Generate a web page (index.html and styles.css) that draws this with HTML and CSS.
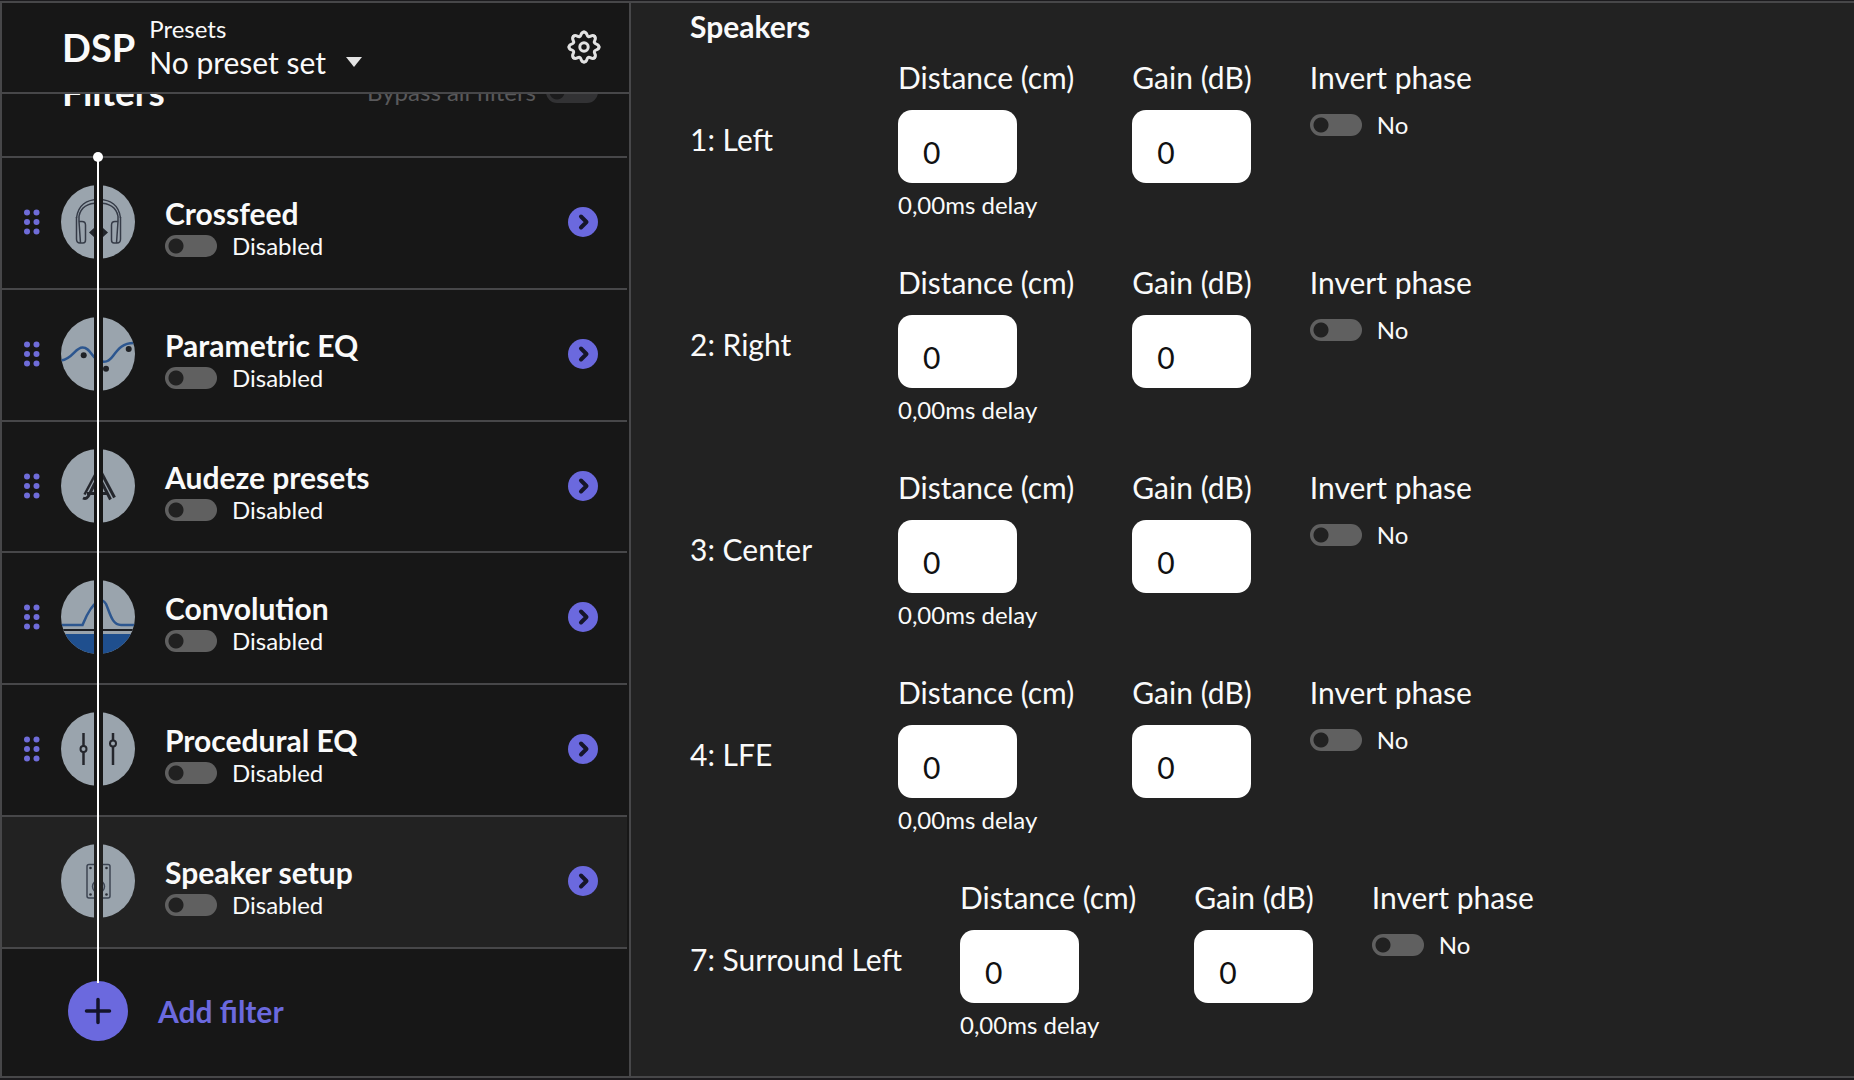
FILE: index.html
```html
<!DOCTYPE html>
<html lang="en">
<head>
<meta charset="utf-8">
<title>DSP</title>
<link rel="stylesheet" href="styles.css">
</head>
<body>
<svg class="defs" aria-hidden="true">
  <defs>
    <clipPath id="halves"><path d="M0 0H33V74H0zM42 0H74V74H42z"/></clipPath>
    <clipPath id="disc"><circle cx="37" cy="37" r="37"/></clipPath>
    <symbol id="grip" viewBox="0 0 16 26"><g fill="#6f6cd9"><circle cx="3" cy="3.500" r="3"/><circle cx="12.500" cy="3.500" r="3"/><circle cx="3" cy="13" r="3"/><circle cx="12.500" cy="13" r="3"/><circle cx="3" cy="22.500" r="3"/><circle cx="12.500" cy="22.500" r="3"/></g></symbol>
    <symbol id="chevron" viewBox="0 0 30 30"><circle cx="15" cy="15" r="15" fill="#6b69de"/><path d="M13 9.500L18.500 15L13 20.500" fill="none" stroke="#16162a" stroke-width="4" stroke-linecap="round" stroke-linejoin="round"/></symbol>
    <path id="tooth" d="M17 2C20.500 2 19.300 5.800 21.300 6.600S25.100 3.900 27.600 6.400"/>
  </defs>
</svg>
<div class="app">
  <aside class="sidebar">
    <header class="top">
      <h1 class="logo">DSP</h1>
      <div class="preset">
        <span class="preset-label" id="preset-label">Presets</span>
        <button class="preset-button" type="button" aria-labelledby="preset-label preset-value"><span id="preset-value">No preset set</span><svg class="caret" viewBox="0 0 16 10"><path d="M0 0H16L8 10z" fill="#e4e4e4"/></svg></button>
      </div>
      <button class="gear" type="button" aria-label="Settings">
        <svg viewBox="0 0 34 34" fill="none" stroke="#e2e2e2" stroke-width="3" stroke-linecap="round"><use href="#tooth"/><use href="#tooth" transform="rotate(45 17 17)"/><use href="#tooth" transform="rotate(90 17 17)"/><use href="#tooth" transform="rotate(135 17 17)"/><use href="#tooth" transform="rotate(180 17 17)"/><use href="#tooth" transform="rotate(225 17 17)"/><use href="#tooth" transform="rotate(270 17 17)"/><use href="#tooth" transform="rotate(315 17 17)"/><circle cx="17" cy="17" r="4.200"/></svg>
      </button>
    </header>
    <div class="filters-head">
      <h2 class="filters-title">Filters</h2>
      <label class="bypass"><span>Bypass all filters</span><input class="toggle" type="checkbox" disabled></label>
    </div>
    <ul class="filters">
      <li class="filter">
        <svg class="grip"><use href="#grip"/></svg>
        <svg class="icon" viewBox="0 0 74 74"><g clip-path="url(#halves)"><circle cx="37" cy="37" r="37" fill="#9aa4ad"/><g fill="none" stroke="#353b47" stroke-width="1.500"><path d="M15.500 33C17 20 26 14.500 37.500 14.500S58 20 59.500 33"/><path d="M18 31C20 22 27 18 37.500 18S55 22 57 31"/><path d="M15.500 32V54Q15.500 58 19 58H22Q24.500 58 24.500 55V40Q24.500 36.500 21 36.500H18L19.500 58M18 31V37"/><path d="M59.500 32V54Q59.500 58 56 58H53Q50.500 58 50.500 55V40Q50.500 36.500 54 36.500H57L55.500 58M57 31V37"/></g><path d="M28 47.500L33 43V52zM47 47.500L42 43V52z" fill="#22252b"/></g></svg>
        <div class="info"><h3 class="name">Crossfeed</h3><label class="switch"><input class="toggle" type="checkbox"><span>Disabled</span></label></div>
        <button class="open" type="button" aria-label="Open Crossfeed"><svg><use href="#chevron"/></svg></button>
      </li>
      <li class="filter">
        <svg class="grip"><use href="#grip"/></svg>
        <svg class="icon" viewBox="0 0 74 74"><g clip-path="url(#halves)"><circle cx="37" cy="37" r="37" fill="#9aa4ad"/><path clip-path="url(#disc)" d="M0 43.500C12 42 14 30.500 21.500 30.500S30 39 36 42.500S47 46 52 39S62 25.500 74 26" fill="none" stroke="#2c568f" stroke-width="2.500"/><g fill="#202226"><circle cx="22.700" cy="38.300" r="3"/><circle cx="45" cy="51.700" r="3"/><circle cx="67.700" cy="32" r="3"/></g></g></svg>
        <div class="info"><h3 class="name">Parametric EQ</h3><label class="switch"><input class="toggle" type="checkbox"><span>Disabled</span></label></div>
        <button class="open" type="button" aria-label="Open Parametric EQ"><svg><use href="#chevron"/></svg></button>
      </li>
      <li class="filter">
        <svg class="grip"><use href="#grip"/></svg>
        <svg class="icon" viewBox="0 0 74 74"><g clip-path="url(#halves)"><circle cx="37" cy="37" r="37" fill="#9aa4ad"/><g fill="none" stroke="#24262c"><path d="M34.500 25L23.500 45.500" stroke-width="2.500"/><path d="M34 34L28.500 45Q26 51 22 49" stroke-width="3"/><path d="M26 44.500H47" stroke-width="3"/><path d="M40.500 24L53.500 48.500" stroke-width="3"/><path d="M38.500 29L49.500 50.500" stroke-width="3"/></g></g></svg>
        <div class="info"><h3 class="name">Audeze presets</h3><label class="switch"><input class="toggle" type="checkbox"><span>Disabled</span></label></div>
        <button class="open" type="button" aria-label="Open Audeze presets"><svg><use href="#chevron"/></svg></button>
      </li>
      <li class="filter">
        <svg class="grip"><use href="#grip"/></svg>
        <svg class="icon" viewBox="0 0 74 74"><g clip-path="url(#halves)"><g clip-path="url(#disc)"><rect width="74" height="74" fill="#9aa4ad"/><path d="M0 45H21.500C24 39 29 26 37 21.500Q42 18.500 45 24C49 33 51 45 60 45H74" fill="none" stroke="#2c568f" stroke-width="2.500"/><path d="M0 50H74" stroke="#1b1d22" stroke-width="2"/><rect y="54" width="74" height="20" fill="#1f4f8e"/></g></g></svg>
        <div class="info"><h3 class="name">Convolution</h3><label class="switch"><input class="toggle" type="checkbox"><span>Disabled</span></label></div>
        <button class="open" type="button" aria-label="Open Convolution"><svg><use href="#chevron"/></svg></button>
      </li>
      <li class="filter">
        <svg class="grip"><use href="#grip"/></svg>
        <svg class="icon" viewBox="0 0 74 74"><g clip-path="url(#halves)"><circle cx="37" cy="37" r="37" fill="#9aa4ad"/><g fill="#9aa4ad" stroke="#24262c" stroke-width="2"><path d="M22.500 21V53M52 21V53" stroke-width="2.500"/><circle cx="22.500" cy="37" r="3"/><circle cx="52" cy="31.500" r="3"/></g></g></svg>
        <div class="info"><h3 class="name">Procedural EQ</h3><label class="switch"><input class="toggle" type="checkbox"><span>Disabled</span></label></div>
        <button class="open" type="button" aria-label="Open Procedural EQ"><svg><use href="#chevron"/></svg></button>
      </li>
      <li class="filter selected">
        <span class="grip"></span>
        <svg class="icon" viewBox="0 0 74 74"><g clip-path="url(#halves)"><circle cx="37" cy="37" r="37" fill="#9aa4ad"/><g fill="none" stroke="#3c4452" stroke-width="1.500"><rect x="26" y="20.500" width="23" height="33.500" rx="2"/><circle cx="37.500" cy="42.500" r="6"/></g><g fill="#2b2f38"><circle cx="29.500" cy="24" r="1.300"/><circle cx="45.500" cy="24" r="1.300"/><circle cx="29.500" cy="50.500" r="1.300"/><circle cx="45.500" cy="50.500" r="1.300"/></g></g></svg>
        <div class="info"><h3 class="name">Speaker setup</h3><label class="switch"><input class="toggle" type="checkbox"><span>Disabled</span></label></div>
        <button class="open" type="button" aria-label="Open Speaker setup"><svg><use href="#chevron"/></svg></button>
      </li>
    </ul>
    <div class="add-row">
      <button class="add" type="button"><svg viewBox="0 0 60 60"><circle cx="30" cy="30" r="30" fill="#6b69de"/><path d="M30 18.500V41.500M18.500 30H41.500" stroke="#14142a" stroke-width="3.500" stroke-linecap="round"/></svg><span>Add filter</span></button>
    </div>
  </aside>
  <main class="panel">
    <h2 class="panel-title">Speakers</h2>
    <section class="speaker">
      <h3 class="channel">1: Left</h3>
      <div class="field"><label for="d1">Distance (cm)</label><input class="number" id="d1" type="text" value="0"><span class="delay">0,00ms delay</span></div>
      <div class="field"><label for="g1">Gain (dB)</label><input class="number" id="g1" type="text" value="0"></div>
      <div class="field"><label for="p1">Invert phase</label><div class="switch phase"><input class="toggle" id="p1" type="checkbox"><span>No</span></div></div>
    </section>
    <section class="speaker">
      <h3 class="channel">2: Right</h3>
      <div class="field"><label for="d2">Distance (cm)</label><input class="number" id="d2" type="text" value="0"><span class="delay">0,00ms delay</span></div>
      <div class="field"><label for="g2">Gain (dB)</label><input class="number" id="g2" type="text" value="0"></div>
      <div class="field"><label for="p2">Invert phase</label><div class="switch phase"><input class="toggle" id="p2" type="checkbox"><span>No</span></div></div>
    </section>
    <section class="speaker">
      <h3 class="channel">3: Center</h3>
      <div class="field"><label for="d3">Distance (cm)</label><input class="number" id="d3" type="text" value="0"><span class="delay">0,00ms delay</span></div>
      <div class="field"><label for="g3">Gain (dB)</label><input class="number" id="g3" type="text" value="0"></div>
      <div class="field"><label for="p3">Invert phase</label><div class="switch phase"><input class="toggle" id="p3" type="checkbox"><span>No</span></div></div>
    </section>
    <section class="speaker">
      <h3 class="channel">4: LFE</h3>
      <div class="field"><label for="d4">Distance (cm)</label><input class="number" id="d4" type="text" value="0"><span class="delay">0,00ms delay</span></div>
      <div class="field"><label for="g4">Gain (dB)</label><input class="number" id="g4" type="text" value="0"></div>
      <div class="field"><label for="p4">Invert phase</label><div class="switch phase"><input class="toggle" id="p4" type="checkbox"><span>No</span></div></div>
    </section>
    <section class="speaker">
      <h3 class="channel">7: Surround Left</h3>
      <div class="field"><label for="d7">Distance (cm)</label><input class="number" id="d7" type="text" value="0"><span class="delay">0,00ms delay</span></div>
      <div class="field"><label for="g7">Gain (dB)</label><input class="number" id="g7" type="text" value="0"></div>
      <div class="field"><label for="p7">Invert phase</label><div class="switch phase"><input class="toggle" id="p7" type="checkbox"><span>No</span></div></div>
    </section>
  </main>
</div>
</body>
</html>
```
FILE: styles.css
```css
:root {
  --dark: #171717;
  --panel: #222222;
  --line: #474749;
  --accent: #6b69de;
}

* {
  box-sizing: border-box;
}

body {
  margin: 0;
  background: #1c1b1e;
  color: #fafafa;
  font-family: Lato, "Open Sans", sans-serif;
  font-size: 30px;
}

h1,
h2,
h3,
ul {
  margin: 0;
  padding: 0;
  list-style: none;
}

button {
  padding: 0;
  border: 0;
  background: none;
  color: inherit;
  font: inherit;
  cursor: pointer;
}

svg {
  display: block;
}

.defs {
  position: absolute;
  width: 0;
  height: 0;
}

.app {
  display: flex;
  min-height: 100vh;
  border-top: 1px solid #1c1b1e;
  border-bottom: 2px solid #1c1b1e;
}

.sidebar {
  display: flex;
  flex-direction: column;
  flex: none;
  width: 631px;
  background: var(--dark);
  border: 2px solid var(--line);
}

.top {
  display: flex;
  align-items: center;
  height: 91px;
  padding: 0 28px 2px 60px;
  border-bottom: 2px solid var(--line);
}

.logo {
  font-size: 38px;
  line-height: 46px;
  font-weight: 700;
}

.preset {
  display: flex;
  flex-direction: column;
  align-items: flex-start;
  margin-left: 14px;
  padding-bottom: 2px;
}

.preset-label {
  font-size: 24px;
  line-height: 32px;
}

.preset-button {
  display: flex;
  align-items: center;
  gap: 20px;
  font-size: 30px;
  line-height: 34px;
}

.caret {
  width: 16px;
  height: 10px;
}

.gear {
  margin-left: auto;
}

.gear svg {
  width: 34px;
  height: 34px;
}

.filters-head {
  display: flex;
  align-items: flex-end;
  justify-content: space-between;
  height: 62px;
  padding: 0 31px 42px 60px;
  overflow: hidden;
}

.filters-title {
  font-size: 37px;
  line-height: 44px;
}

.bypass {
  display: flex;
  align-items: center;
  gap: 10px;
  padding-bottom: 8px;
  font-size: 24px;
  line-height: 28px;
  color: #59595b;
}

.bypass .toggle {
  background: radial-gradient(circle at 11px 11px, #1b1b1c 7px, transparent 8px) #323234;
}

.filters {
  position: relative;
  display: flex;
  flex-direction: column;
  flex: 1;
  margin-right: 2px;
}

/* Signal path that runs through every filter icon */
.filters::before {
  content: "";
  position: absolute;
  z-index: 1;
  left: 95px;
  top: 0;
  bottom: -34px;
  width: 2px;
  background: #ffffff;
}

.filters::after {
  content: "";
  position: absolute;
  z-index: 1;
  left: 91px;
  top: -4px;
  width: 10px;
  height: 10px;
  border-radius: 50%;
  background: #ffffff;
}

.filter {
  display: flex;
  align-items: center;
  flex: 1;
  padding: 0 29px 2px 22px;
  border-top: 2px solid var(--line);
}

.filter:last-child {
  border-bottom: 2px solid var(--line);
}

.selected {
  background: var(--panel);
}

.grip {
  width: 16px;
  height: 26px;
}

.icon {
  width: 74px;
  height: 74px;
  margin-left: 21px;
}

.info {
  display: flex;
  flex-direction: column;
  gap: 1px;
  margin-left: 30px;
  padding-top: 11px;
}

.name {
  font-size: 30px;
  line-height: 36px;
}

.switch {
  display: flex;
  align-items: center;
  gap: 15px;
  font-size: 24px;
  line-height: 28px;
}

.toggle {
  appearance: none;
  width: 52px;
  height: 22px;
  margin: 0;
  border-radius: 11px;
  background: radial-gradient(circle at 11px 11px, #212121 7px, transparent 8px) #606060;
}

.open {
  margin-left: auto;
}

.open svg {
  width: 30px;
  height: 30px;
}

.add-row {
  display: flex;
  align-items: center;
  height: 127px;
  padding: 0 0 3px 66px;
}

.add {
  display: flex;
  align-items: center;
  gap: 30px;
  color: var(--accent);
  font-weight: 700;
}

.add svg {
  width: 60px;
  height: 60px;
}

.panel {
  flex: 1;
  padding: 4px 59px 0;
  background: var(--panel);
  border-top: 2px solid var(--line);
  border-bottom: 2px solid var(--line);
}

.panel-title {
  font-size: 30px;
  line-height: 38px;
}

.speaker {
  display: flex;
  gap: 58px;
  height: 205px;
  padding-top: 13px;
}

.channel {
  min-width: 150px;
  padding-top: 62px;
  font-weight: 400;
  line-height: 38px;
  font-size: 30px;
}

.field {
  display: flex;
  flex-direction: column;
  align-items: flex-start;
  line-height: 38px;
}

.number {
  width: 119px;
  height: 73px;
  margin-top: 14px;
  padding: 10px 25px 0;
  border: 0;
  border-radius: 14px;
  background: #ffffff;
  color: #111111;
  font: 400 30px Lato, "Open Sans", sans-serif;
}

.delay {
  margin-top: 7px;
  font-size: 24px;
  line-height: 30px;
}

.phase {
  margin-top: 15px;
}
```
